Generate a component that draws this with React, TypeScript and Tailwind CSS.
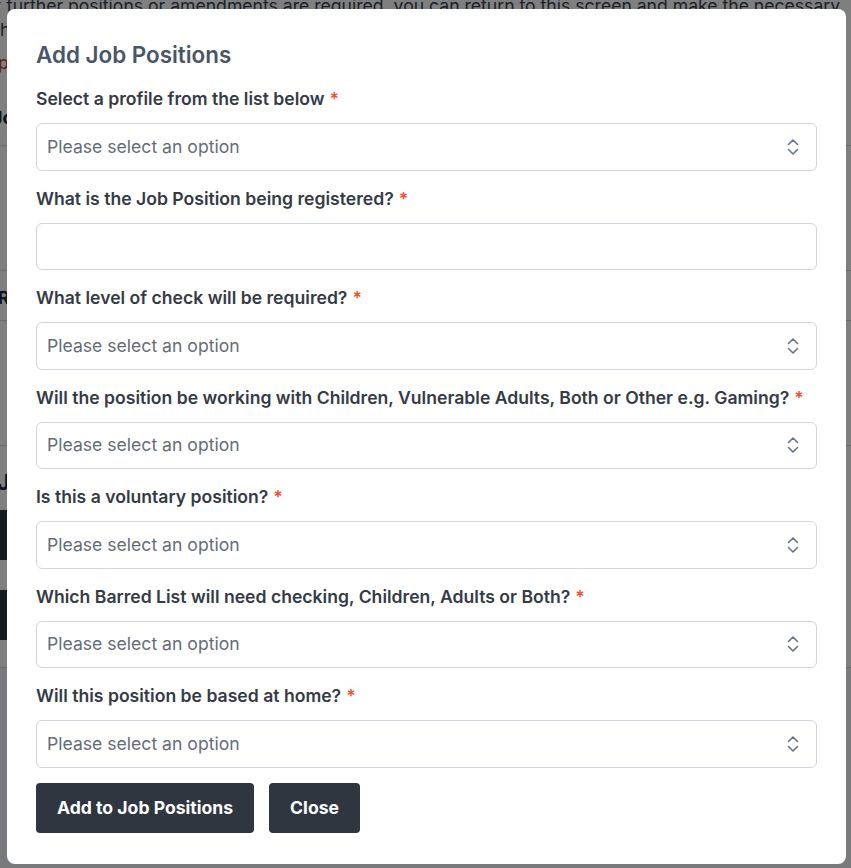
import React from "react";

const font = { fontFamily: "Inter, 'Noto Sans', sans-serif" };

function Chevrons() {
  return (
    <svg width="14" height="22" viewBox="0 0 14 22" fill="none" stroke="#64748b" strokeWidth="1.6" strokeLinecap="round" strokeLinejoin="round">
      <path d="M2.5 8.5 L7 4 L11.5 8.5" />
      <path d="M2.5 13.5 L7 18 L11.5 13.5" />
    </svg>
  );
}

function Label({ children }: { children: React.ReactNode }) {
  return (
    <div className="text-[17.6px] leading-6 font-semibold text-[#353b46] mb-[12px] whitespace-nowrap">
      {children}
      <span className="text-[#ee5230] ml-[5px]">*</span>
    </div>
  );
}

function SelectField({ label }: { label: string }) {
  return (
    <div className="mb-[16px]">
      <Label>{label}</Label>
      <div className="h-[47.5px] rounded-md border border-[#cfd6e0] flex items-center justify-between pl-[10px] pr-[16px]">
        <span className="text-[17.6px] text-[#656c78]">Please select an option</span>
        <Chevrons />
      </div>
    </div>
  );
}

function TextField({ label }: { label: string }) {
  return (
    <div className="mb-[16px]">
      <Label>{label}</Label>
      <div className="h-[47.5px] rounded-md border border-[#cfd6e0]" />
    </div>
  );
}

export default function App() {
  return (
    <div style={font} className="relative h-[868px] overflow-hidden bg-white">
      {/* background page */}
      <div className="flex flex-col">
        <p className="-mt-[6px] -ml-[10px] w-[900px] text-[17.6px] leading-6 text-[#374151]">
          If further positions or amendments are required, you can return to this screen and make the necessary changes. e will review each of the positions below when submitted.
        </p>
        <p className="mt-[9px] -ml-[2px] w-[880px] text-[17.6px] leading-6 text-[#c2410c]">
          please note that all changes must be confirmed by an administrator •
        </p>
        <p className="mt-[31px] -ml-[8px] text-[18px] leading-6 font-bold text-[#1f2937]">Job Roles</p>
        <div className="mt-[15px] border-b border-[#d1d5db]" />
        <div className="h-[124px]" />
        <div className="border-b border-[#d1d5db]" />
        <div className="h-[49px] flex items-center -ml-[2px] pt-[6px] font-bold text-[17.6px] text-[#1f2937]">Role</div>
        <div className="border-b border-[#d1d5db]" />
        <div className="h-[124px]" />
        <div className="border-b border-[#d1d5db]" />
        <div className="h-[64px] flex items-center -ml-[3px] pt-[8px] font-bold text-[22px] text-[#1e293b]">Job Positions</div>
        <div className="h-[50px] w-[200px] bg-[#2f3640]" />
        <div className="h-[30px]" />
        <div className="h-[50px] w-[200px] bg-[#2f3640]" />
        <div className="h-[27px]" />
        <div className="h-[210px] bg-gray-100 border-t border-[#d1d5db]" />
      </div>

      {/* overlay */}
      <div className="fixed inset-0 bg-black/50">
        <div className="ml-[7px] mt-[9px] w-[839px] rounded-lg bg-white px-[29px] pt-[32px] pb-[31px]">
          <h2 className="text-[22.4px] leading-7 font-semibold text-[#4a5568] mb-[18px]">Add Job Positions</h2>
          <SelectField label="Select a profile from the list below" />
          <TextField label="What is the Job Position being registered?" />
          <SelectField label="What level of check will be required?" />
          <SelectField label="Will the position be working with Children, Vulnerable Adults, Both or Other e.g. Gaming?" />
          <SelectField label="Is this a voluntary position?" />
          <SelectField label="Which Barred List will need checking, Children, Adults or Both?" />
          <SelectField label="Will this position be based at home?" />
          <div className="-mt-[0.5px] flex gap-[15px]">
            <button className="h-[50px] rounded bg-[#2f3640] px-[21px] text-[17.6px] font-bold text-white">Add to Job Positions</button>
            <button className="h-[50px] rounded bg-[#2f3640] px-[21px] text-[17.6px] font-bold text-white">Close</button>
          </div>
        </div>
      </div>
    </div>
  );
}
